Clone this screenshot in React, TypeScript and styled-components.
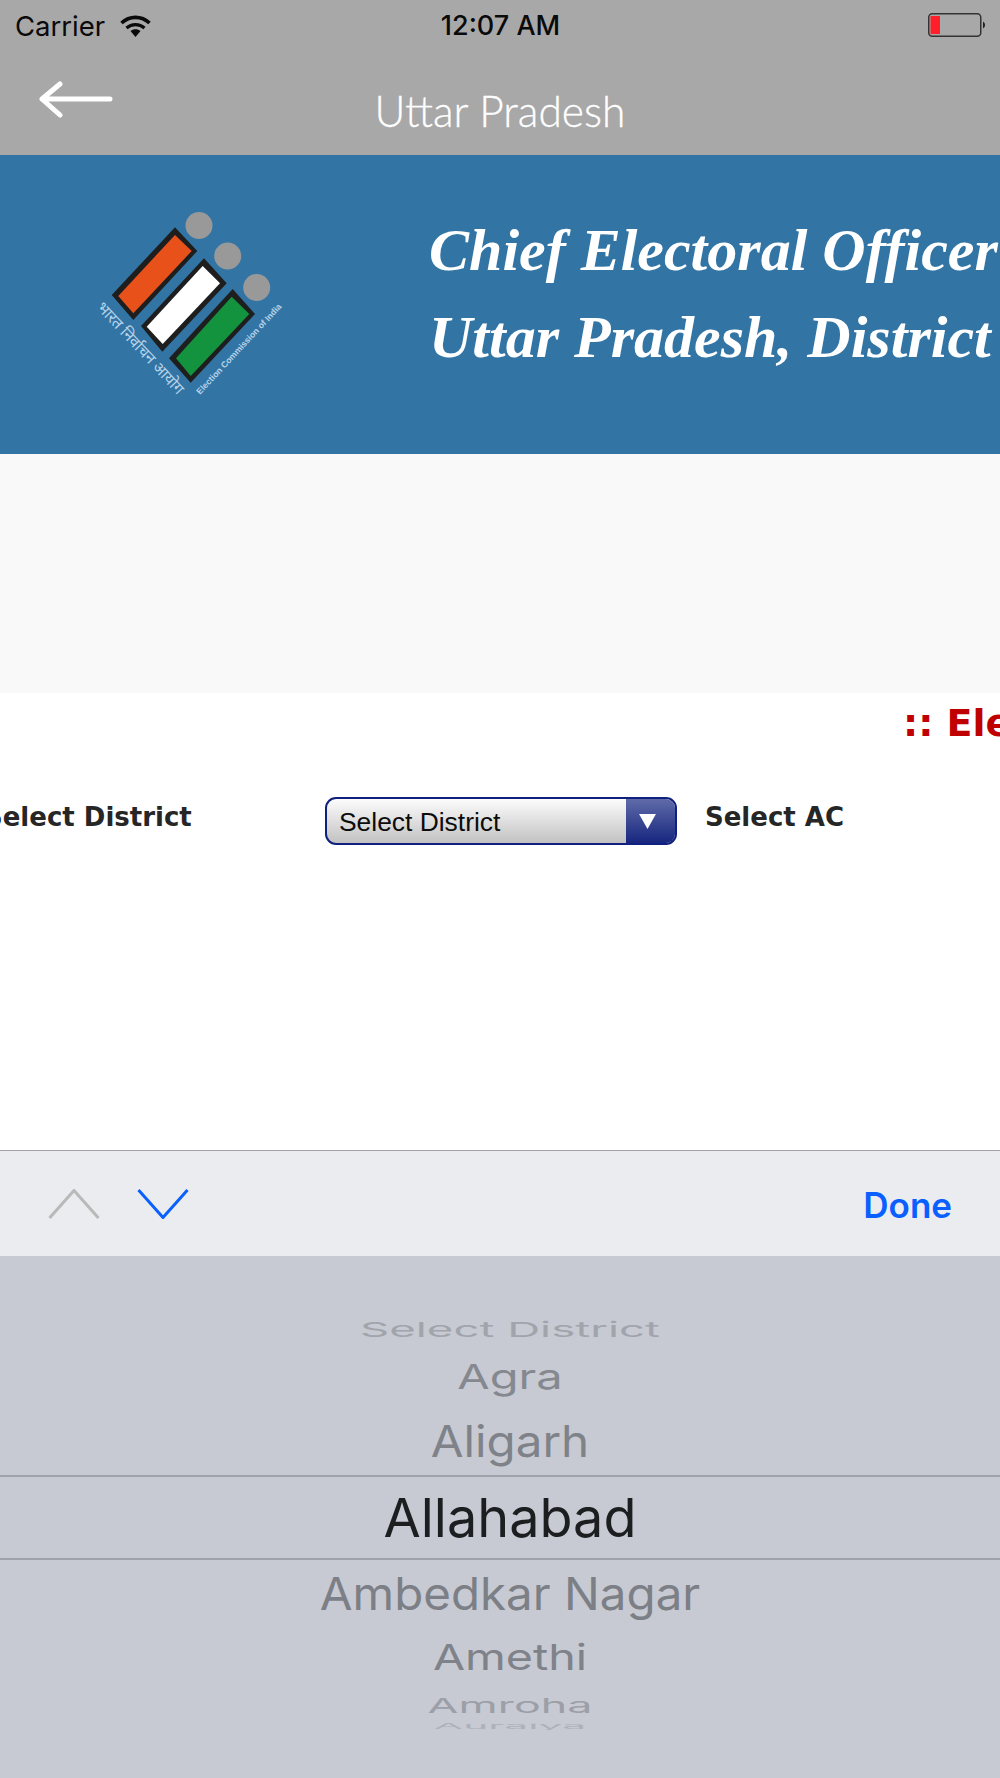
import React from "react";
import styled, { createGlobalStyle } from "styled-components";

const Global = createGlobalStyle`
  html, body { margin: 0; padding: 0; background: #fff; }
  #root { width: 1000px; height: 1778px; }
`;

const Screen = styled.div`
  width: 1000px;
  height: 1778px;
  overflow: hidden;
  display: flex;
  flex-direction: column;
  font-family: Inter, "Liberation Sans", sans-serif;
`;

const Header = styled.header`
  height: 155px;
  flex: none;
  background: #a8a8a8;
  display: flex;
  flex-direction: column;
`;

const StatusBar = styled.div`
  height: 50px;
  display: grid;
  grid-template-columns: 1fr auto 1fr;
  align-items: center;
  padding: 0 14px 0 15px;
  color: #0a0a0a;
`;

const StatusLeft = styled.div`
  display: flex;
  align-items: center;
  gap: 15px;
  font-family: Inter, sans-serif;
  font-size: 27.5px;
  margin-top: 1px;
`;

const Clock = styled.div`
  font-family: Inter, sans-serif;
  font-size: 27px;
  font-weight: 500;
  margin-top: 1px;
`;

const BatteryBox = styled.div`
  justify-self: end;
  display: flex;
  align-items: center;
`;

const NavBar = styled.div`
  flex: 1;
  display: grid;
  grid-template-columns: 1fr auto 1fr;
  padding: 26px 0 0 39px;
  color: #fff;
`;

const BackIcon = styled.svg`
  width: 76px;
  height: 38px;
  margin-top: 5px;
`;

const NavTitle = styled.div`
  font-family: Lato, sans-serif;
  font-weight: 300;
  font-size: 42.5px;
  line-height: 48px;
  margin-top: 11px;
  margin-left: -39px;
  -webkit-text-stroke: 0.3px #fff;
`;

const Banner = styled.section`
  height: 299px;
  flex: none;
  background: #3275a5;
  display: flex;
  padding-left: 80px;
`;

const LogoSvg = styled.svg`
  width: 220px;
  height: 240px;
  margin-top: 35px;
  flex: none;
`;

const BannerText = styled.h1`
  margin: 52px 0 0 129px;
  white-space: nowrap;
  font-family: "Liberation Serif", serif;
  font-style: italic;
  font-weight: 700;
  font-size: 60px;
  line-height: 87px;
  color: #fff;
`;

const Notice = styled.div`
  height: 239px;
  flex: none;
  background: #f9f9f9;
`;

const Main = styled.main`
  flex: 1;
  background: #fff;
  display: flex;
  flex-direction: column;
`;

const Marquee = styled.div`
  padding: 6px 0 0 903px;
  height: 104px;
  box-sizing: border-box;
  white-space: nowrap;
  font-family: "DejaVu Sans", sans-serif;
  font-weight: 700;
  font-size: 38px;
  line-height: 48px;
  color: #c00000;
`;

const FormRow = styled.div`
  display: flex;
  align-items: flex-start;
  margin-left: -16px;
`;

const FieldLabel = styled.label<{ $width?: number }>`
  font-family: "DejaVu Sans", sans-serif;
  font-weight: 700;
  font-size: 26px;
  line-height: 34px;
  color: #262626;
  margin-top: 3px;
  white-space: nowrap;
  width: ${(p) => (p.$width ? `${p.$width}px` : "auto")};
`;

const SelectBox = styled.div`
  width: 352px;
  height: 48px;
  box-sizing: border-box;
  border: 2px solid #10207e;
  border-radius: 11px;
  display: flex;
  overflow: hidden;
  margin-right: 28px;
  background: linear-gradient(#fcfcfc, #c2c2c2);
`;

const SelectValue = styled.div`
  flex: 1;
  padding-left: 12px;
  font-family: "Liberation Sans", sans-serif;
  font-size: 26.4px;
  line-height: 47px;
  color: #0c0c0c;
`;

const SelectArrow = styled.div`
  width: 49px;
  box-sizing: border-box;
  padding-right: 6px;
  background: linear-gradient(#5f6ba8, #17267f);
  display: flex;
  align-items: center;
  justify-content: center;
`;

const ArrowGlyph = styled.svg`
  width: 17px;
  height: 15px;
`;

const Toolbar = styled.div`
  height: 106px;
  flex: none;
  box-sizing: border-box;
  border-top: 1px solid #a0a2a6;
  background: #ebecef;
  display: flex;
  align-items: center;
  padding: 0 48px;
`;

const Chevron = styled.svg`
  width: 52px;
  height: 30px;
  margin-right: 37px;
`;

const DoneButton = styled.div`
  margin-left: auto;
  color: #0a60ff;
  font-family: Inter, sans-serif;
  font-weight: 600;
  font-size: 35px;
  margin-top: 2px;
`;

const Picker = styled.div`
  height: 522px;
  flex: none;
  background: #c7cad3;
  padding-top: 53px;
  box-sizing: border-box;
  display: flex;
  flex-direction: column;
`;

const Row = styled.div<{ $h: number; $top?: number; $selected?: boolean }>`
  height: ${(p) => p.$h}px;
  margin-top: ${(p) => p.$top ?? 0}px;
  box-sizing: border-box;
  flex: none;
  display: flex;
  align-items: center;
  justify-content: center;
  overflow: hidden;
  padding-left: 20px;
  ${(p) => (p.$selected ? "border-top: 2px solid #a0a2a9; border-bottom: 2px solid #a0a2a9;" : "")}
`;

const RowText = styled.span<{ $size: number; $sy: number; $color: string }>`
  font-family: Inter, "Liberation Sans", sans-serif;
  font-size: ${(p) => p.$size}px;
  line-height: 1;
  color: ${(p) => p.$color};
  transform: scaleY(${(p) => p.$sy});
  white-space: nowrap;
`;

const wheel = [
  { t: "Select District", h: 42, size: 45.6, sy: 0.45, c: "#a1a4ab" },
  { t: "Agra", h: 51, size: 47, sy: 0.73, c: "#85888f" },
  { t: "Aligarh", h: 68, top: 5, size: 47.5, sy: 0.93, c: "#7f8288" },
  { t: "Allahabad", h: 85, size: 54, sy: 1, c: "#1d1e20", sel: true },
  { t: "Ambedkar Nagar", h: 67, size: 47.5, sy: 0.95, c: "#7c7f85" },
  { t: "Amethi", h: 60, size: 46.6, sy: 0.77, c: "#7f8288" },
  { t: "Amroha", h: 36, size: 44.8, sy: 0.46, c: "#9c9fa7" },
  { t: "Auraiya", h: 7, size: 42.6, sy: 0.18, c: "#aeb1b9" },
];

function Logo() {
  return (
    <LogoSvg viewBox="0 0 220 240">
      <circle cx="119" cy="35.5" r="13.5" fill="#999" />
      <circle cx="147.7" cy="66" r="13.5" fill="#999" />
      <circle cx="176.7" cy="97.5" r="13.5" fill="#999" />
      <polygon points="95,37.3 117.3,61 53.3,130 31.7,105" fill="#1e1e1e" />
      <polygon points="95,45 111.7,61 53.3,123.3 38.3,106" fill="#e8521a" />
      <polygon points="124,68.3 146.7,93.3 82.3,161.7 61,136" fill="#1e1e1e" />
      <polygon points="122.7,76 140,93.3 82.7,154 66.7,136.7" fill="#fff" />
      <polygon points="152.7,99 175,124 110.7,192.7 89,168.3" fill="#1e1e1e" />
      <polygon points="151.7,106.7 169.3,124 110.7,186 96,168.3" fill="#14933f" />
      <text transform="translate(16 118) rotate(47)" fontFamily="Noto Sans, sans-serif" fontSize="15.5" fill="#b8d4ea">भारत निर्वाचन आयोग</text>
      <text transform="translate(120 205) rotate(-47)" fontFamily="Liberation Sans, sans-serif" fontSize="8.6" fontWeight="700" fill="#b8d4ea">Election Commission of India</text>
    </LogoSvg>
  );
}

export default function App() {
  return (
    <Screen>
      <Global />
      <Header>
        <StatusBar>
          <StatusLeft>
            Carrier
            <svg width="31" height="22" viewBox="0 0 31 22">
              <path d="M1.5 8C9.5 0.5 21.5 0.5 29.5 8" fill="none" stroke="#0a0a0a" strokeWidth="3.6" />
              <path d="M6.5 13C11.5 8.5 19.5 8.5 24.5 13" fill="none" stroke="#0a0a0a" strokeWidth="3.2" />
              <path d="M10.5 16C13.5 13.5 17.5 13.5 20.5 16L15.5 22Z" fill="#0a0a0a" />
            </svg>
          </StatusLeft>
          <Clock>12:07 AM</Clock>
          <BatteryBox>
            <svg width="58" height="24" viewBox="0 0 58 24">
              <rect x="0.75" y="0.75" width="52" height="22.5" rx="3.5" fill="none" stroke="#333" strokeWidth="1.5" />
              <rect x="2.5" y="3" width="9.5" height="18" fill="#ff1f2b" />
              <path d="M55 8.5a4 4 0 0 1 0 7Z" fill="#222" />
            </svg>
          </BatteryBox>
        </StatusBar>
        <NavBar>
          <BackIcon viewBox="0 0 76 38">
            <path d="M3 18H71M21 3 3 18 21 34" fill="none" stroke="#fff" strokeWidth="5" strokeLinecap="round" strokeLinejoin="round" />
          </BackIcon>
          <NavTitle>Uttar Pradesh</NavTitle>
        </NavBar>
      </Header>
      <Banner>
        <Logo />
        <BannerText>
          Chief Electoral Officer
          <br />
          Uttar Pradesh, District
        </BannerText>
      </Banner>
      <Notice />
      <Main>
        <Marquee>:: Election</Marquee>
        <FormRow>
          <FieldLabel $width={341}>Select District</FieldLabel>
          <SelectBox>
            <SelectValue>Select District</SelectValue>
            <SelectArrow>
              <ArrowGlyph viewBox="0 0 18 16">
                <polygon points="0,0 18,0 9,16" fill="#fff" />
              </ArrowGlyph>
            </SelectArrow>
          </SelectBox>
          <FieldLabel>Select AC</FieldLabel>
        </FormRow>
      </Main>
      <Toolbar>
        <Chevron viewBox="0 0 52 30">
          <path d="M1.5 29 26 1.500 50.500 29" fill="none" stroke="#b9b9b9" strokeWidth="3" />
        </Chevron>
        <Chevron viewBox="0 0 52 30">
          <path d="M1.500 1 26 28.500 50.500 1" fill="none" stroke="#0a60ff" strokeWidth="3" />
        </Chevron>
        <DoneButton>Done</DoneButton>
      </Toolbar>
      <Picker>
        {wheel.map((w) => (
          <Row key={w.t} $h={w.h} $top={w.top} $selected={w.sel}>
            <RowText $size={w.size} $sy={w.sy} $color={w.c}>
              {w.t}
            </RowText>
          </Row>
        ))}
      </Picker>
    </Screen>
  );
}
